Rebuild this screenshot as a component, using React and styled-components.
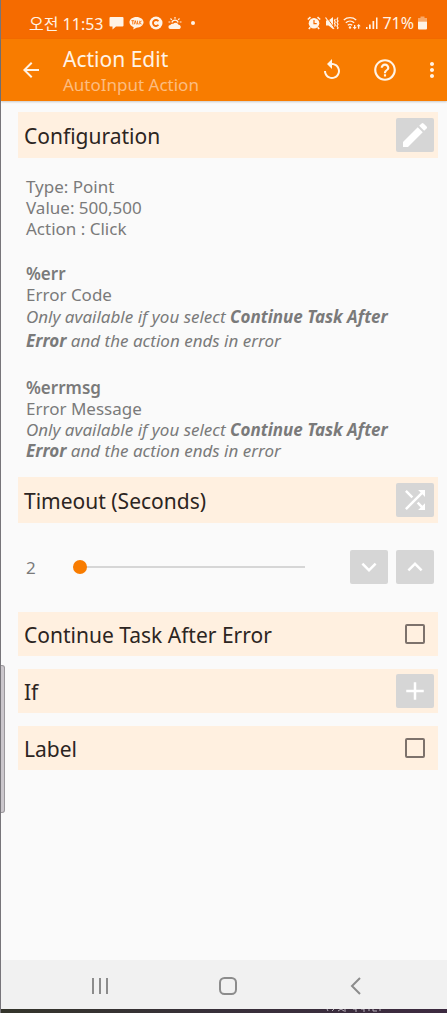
import React, { useState } from 'react';
import styled, { createGlobalStyle } from 'styled-components';
import {
  MdAdd,
  MdArrowBack,
  MdEdit,
  MdExpandLess,
  MdExpandMore,
  MdHelpOutline,
  MdMoreVert,
  MdReplay,
  MdShuffle,
} from 'react-icons/md';

const GlobalStyle = createGlobalStyle`
  * {
    box-sizing: border-box;
  }

  body {
    margin: 0;
    background-color: #fafafa;
    font-family: 'Noto Sans', 'Noto Sans CJK KR', sans-serif;
  }
`;

const Screen = styled.div`
  position: relative;
  display: flex;
  flex-direction: column;
  min-height: 100vh;
  border-left: 1px solid #77757a;
`;

const StatusBar = styled.div`
  display: flex;
  align-items: center;
  justify-content: space-between;
  height: 39px;
  padding: 7px 20px 0 28px;
  background-color: #f56b00;
  color: #fff3e6;
  font-size: 16px;
`;

const StatusGroup = styled.div`
  display: flex;
  align-items: center;
  gap: ${(props) => props.$gap};

  svg {
    display: block;
  }
`;

const Dot = styled.span`
  width: 4px;
  height: 4px;
  margin-left: 4px;
  border-radius: 50%;
  background-color: #fff3e6;
`;

const AppBar = styled.header`
  display: flex;
  align-items: center;
  height: 62px;
  padding-left: 18px;
  background-color: #f87c00;
  box-shadow: 0 1px 2px rgba(0, 0, 0, 0.2);
  color: #fff3e6;
`;

const BarButton = styled.button`
  display: flex;
  justify-content: center;
  width: ${(props) => props.$width || 'auto'};
  padding: 0;
  border: none;
  background: none;
  color: inherit;
  font-size: ${(props) => props.$size || '24px'};
  cursor: pointer;

  svg {
    flex-shrink: 0;
  }
`;

const BarTitles = styled.div`
  flex: 1;
  padding: 2px 0 0 20px;
`;

const BarTitle = styled.h1`
  margin: 0;
  font-size: 21px;
  font-weight: 400;
  line-height: 28px;
`;

const BarSubtitle = styled.div`
  color: #fcbd80;
  font-size: 17px;
  line-height: 24px;
`;

const BarActions = styled.div`
  display: flex;
  align-items: center;
  gap: 28px;
  padding-right: 9px;
`;

const Content = styled.main`
  flex: 1;
  padding: 11px 9px 24px 17px;
`;

const Section = styled.div`
  display: flex;
  align-items: center;
  justify-content: space-between;
  height: ${(props) => (props.$compact ? '44px' : '46px')};
  margin-bottom: ${(props) => (props.$compact ? '13px' : '0')};
  padding: 0 4px 0 6px;
  background-color: #fff0e0;
`;

const SectionTitle = styled.h2`
  margin: 0;
  padding-top: 2px;
  color: #2c2522;
  font-size: 21px;
  font-weight: 400;
`;

const SectionLabel = styled(SectionTitle).attrs({ as: 'label' })`
  flex: 1;
`;

const IconButton = styled.button`
  display: flex;
  align-items: center;
  justify-content: center;
  width: 38px;
  height: 34px;
  padding: 0;
  border: none;
  border-radius: 2px;
  background-color: #d6d6d6;
  color: #ffffff;
  font-size: ${(props) => props.$size || '30px'};
  cursor: pointer;
`;

const Details = styled.div`
  padding: 18px 8px 16px;
  color: #7a7a7a;
  font-size: 17px;
  line-height: 21px;
`;

const Paragraph = styled.p`
  margin: 0 0 24px;

  &:last-child {
    margin-bottom: 0;
  }
`;

const Variable = styled.strong`
  font-weight: 600;
`;

const Note = styled.em`
  display: block;
  line-height: ${(props) => (props.$loose ? '24px' : '21px')};
`;

const SliderRow = styled.div`
  display: flex;
  align-items: center;
  gap: 8px;
  padding: 27px 4px 28px 8px;
  color: #7a7a7a;
  font-size: 17px;
`;

const SliderValue = styled.output`
  width: 39px;
`;

const Slider = styled.input`
  flex: 1;
  min-width: 0;
  height: 14px;
  margin: 0 37px 0 0;
  appearance: none;
  background: linear-gradient(#d6d6d6, #d6d6d6) center / 100% 2px no-repeat;

  &::-webkit-slider-thumb {
    appearance: none;
    width: 14px;
    height: 14px;
    border-radius: 50%;
    background-color: #f87c00;
  }
`;

const CheckBox = styled.input`
  appearance: none;
  width: 20px;
  height: 20px;
  margin: 0 9px;
  border: 2px solid #7d726c;
  border-radius: 2px;

  &:checked {
    background-color: #f87c00;
  }
`;

const NavBar = styled.nav`
  display: flex;
  align-items: center;
  justify-content: space-between;
  height: 49px;
  padding: 2px 82px 0 90px;
  background-color: #f1f1f1;
  color: #8c8c8c;
`;

const Taskbar = styled.div`
  display: flex;
  justify-content: flex-end;
  height: 4px;
  padding-right: 64px;
  background: linear-gradient(90deg, #34352b 0%, #38303a 50%, #3d2a40 100%);
`;

const EdgeHandle = styled.div`
  position: absolute;
  top: 665px;
  left: 0;
  width: 4px;
  height: 148px;
  border: 1px solid #9b989c;
  border-left: none;
  border-radius: 0 3px 3px 0;
  background-color: #cbc7cc;
`;

const ChatIcon = () => (
  <svg width="15" height="14" viewBox="0 0 15 14" fill="currentColor">
    <path d="M1.500 1h12q1 0 1 1v7.500q0 1-1 1H7L3.500 13.500v-3h-2q-1 0-1-1V2q0-1 1-1z" />
  </svg>
);

const TalkIcon = () => (
  <svg width="15" height="14" viewBox="0 0 16 14">
    <path
      fill="currentColor"
      d="M8 .5c4.200 0 7.500 2.500 7.500 5.700S12.200 12 8 12l-3.500 2 .5-2.600C2.300 10.500.5 8.600.5 6.200.5 3 3.800.5 8 .5z"
    />
    <path
      fill="none"
      stroke="#f56b00"
      strokeWidth="0.9"
      d="M2.500 4.500h3M4 4.500v4M5.500 8.500l1.200-4 1.200 4M9 4.500v3.500h1.500M11.500 4.500v4M13.500 4.500l-2 2 2 2"
    />
  </svg>
);

const CoinIcon = () => (
  <svg width="14" height="14" viewBox="0 0 14 14">
    <circle cx="7" cy="7" r="6.500" fill="currentColor" />
    <path
      fill="none"
      stroke="#f56b00"
      strokeWidth="1.800"
      d="M9.400 5.200A3 3 0 1 0 9.400 8.800"
    />
  </svg>
);

const WeatherIcon = () => (
  <svg width="14" height="14" viewBox="0 0 14 14">
    <path
      fill="none"
      stroke="currentColor"
      strokeWidth="1.200"
      d="M7 1v1.800M2.500 2.500l1.300 1.300M11.500 2.500l-1.300 1.300M.5 6h1.800M11.700 6h1.800M3.900 6.500a3.200 3.200 0 0 1 6.200 0"
    />
    <path
      fill="currentColor"
      d="M2.500 13a2 2 0 0 1-.2-4 2.800 2.800 0 0 1 3-1.200 3 3 0 0 1 5.200 1 2.200 2.200 0 0 1 1 4.200z"
    />
  </svg>
);

const AlarmIcon = () => (
  <svg width="14" height="14" viewBox="0 0 14 14">
    <circle cx="7" cy="7.300" r="5.300" fill="currentColor" />
    <path
      fill="none"
      stroke="currentColor"
      strokeWidth="1.600"
      d="M.8 3.500L3.500 1.200M13.200 3.500l-2.700-2.300M3.300 11.300l-1.500 1.700M10.700 11.300l1.500 1.700"
    />
    <path fill="none" stroke="#f56b00" strokeWidth="1.200" d="M7 4v3.700h2.700" />
  </svg>
);

const VibrateIcon = () => (
  <svg width="14" height="14" viewBox="0 0 14 14">
    <path fill="currentColor" d="M1 4.500h2.500L8 1v12L3.500 9.500H1z" />
    <path stroke="#f56b00" strokeWidth="1" d="M1.500 1l8 11" />
    <path stroke="currentColor" strokeWidth="1.200" d="M.5 1.500l8.500 11.500" />
    <path
      fill="none"
      stroke="currentColor"
      strokeWidth="1.200"
      d="M10.300 3l-.8 1.500 .8 1.500-.8 1.500.8 1.500-.8 1.500M13 1.500l-1 1.700 1 1.700-1 1.700 1 1.700-1 1.700 1 1.700-.6 1.300"
    />
  </svg>
);

const WifiIcon = () => (
  <svg width="18" height="14" viewBox="0 0 18 14">
    <path
      fill="none"
      stroke="currentColor"
      strokeWidth="1.300"
      d="M.8 4a9.500 9.500 0 0 1 12.400 0M2.800 6.700a6.500 6.500 0 0 1 8.400 0M4.800 9.200a3.600 3.600 0 0 1 4.400 0"
    />
    <circle cx="7" cy="11.500" r="1.200" fill="currentColor" />
    <path
      fill="currentColor"
      d="M11 9h1.300v2h1.400l-2 2.400-2-2.400H11zM15 12.800h1.300V10.300h1.400l-2-2.300-2 2.300H15z"
    />
  </svg>
);

const SignalIcon = () => (
  <svg width="13" height="14" viewBox="0 0 13 14" fill="currentColor">
    <path d="M1 11h1.500v2H1zM4 8.500h1.700V13H4zM7.500 5h1.700v8H7.500zM11 1.500h1.500V13H11z" />
  </svg>
);

const BatteryIcon = () => (
  <svg width="9" height="14" viewBox="0 0 9 14" fill="currentColor">
    <path opacity="0.45" d="M2.500.5h4V2H9v3.500H0V2h2.500z" />
    <path d="M0 5.500h9v7q0 1-1 1H1q-1 0-1-1z" />
  </svg>
);

const RecentsIcon = () => (
  <svg width="18" height="18" viewBox="0 0 18 18" stroke="currentColor" strokeWidth="2">
    <path d="M2 1v16M9 1v16M16 1v16" />
  </svg>
);

const HomeIcon = () => (
  <svg width="20" height="20" viewBox="0 0 20 20" fill="none" stroke="currentColor" strokeWidth="2">
    <rect x="2" y="2" width="16" height="16" rx="4.500" />
  </svg>
);

const BackIcon = () => (
  <svg width="18" height="18" viewBox="0 0 18 18" fill="none" stroke="currentColor" strokeWidth="2">
    <path d="M13 1L5 9l8 8" />
  </svg>
);

// the slivers of light that peek over the taskbar's top edge
const TaskbarMarks = () => (
  <svg width="58" height="4" viewBox="0 0 58 4" fill="none" stroke="#b5adb8">
    <path d="M2 0l1 2M9 0L7 2M13 2l3-2M16 0l3 2M20 0v3M28 0h3v3M36 0h3v3M43 1h2M48 0v2h4M55 0v2" />
  </svg>
);

const App = () => {
  const [timeout, setTimeoutValue] = useState(2);
  const [continueAfterError, setContinueAfterError] = useState(false);
  const [hasLabel, setHasLabel] = useState(false);

  return (
    <Screen>
      <GlobalStyle />
      <StatusBar>
        <StatusGroup $gap="5px">
          <span>오전 11:53</span>
          <ChatIcon />
          <TalkIcon />
          <CoinIcon />
          <WeatherIcon />
          <Dot />
        </StatusGroup>
        <StatusGroup $gap="4px">
          <AlarmIcon />
          <VibrateIcon />
          <WifiIcon />
          <SignalIcon />
          <span>71%</span>
          <BatteryIcon />
        </StatusGroup>
      </StatusBar>

      <AppBar>
        <BarButton aria-label="Back">
          <MdArrowBack />
        </BarButton>
        <BarTitles>
          <BarTitle>Action Edit</BarTitle>
          <BarSubtitle>AutoInput Action</BarSubtitle>
        </BarTitles>
        <BarActions>
          <BarButton aria-label="Reset">
            <MdReplay />
          </BarButton>
          <BarButton aria-label="Help" $size="26px">
            <MdHelpOutline />
          </BarButton>
          <BarButton aria-label="More options" $width="12px">
            <MdMoreVert />
          </BarButton>
        </BarActions>
      </AppBar>

      <Content>
        <Section>
          <SectionTitle>Configuration</SectionTitle>
          <IconButton aria-label="Edit configuration" $size="32px">
            <MdEdit />
          </IconButton>
        </Section>
        <Details>
          <Paragraph>
            Type: Point
            <br />
            Value: 500,500
            <br />
            Action : Click
          </Paragraph>
          <Paragraph>
            <Variable>%err</Variable>
            <br />
            Error Code
            <Note $loose>
              Only available if you select <strong>Continue Task After Error</strong> and the action ends in error
            </Note>
          </Paragraph>
          <Paragraph>
            <Variable>%errmsg</Variable>
            <br />
            Error Message
            <Note>
              Only available if you select <strong>Continue Task After Error</strong> and the action ends in error
            </Note>
          </Paragraph>
        </Details>

        <Section>
          <SectionTitle>Timeout (Seconds)</SectionTitle>
          <IconButton aria-label="Use variable">
            <MdShuffle />
          </IconButton>
        </Section>
        <SliderRow>
          <SliderValue htmlFor="timeout">{timeout}</SliderValue>
          <Slider
            id="timeout"
            type="range"
            aria-label="Timeout in seconds"
            min="2"
            max="60"
            value={timeout}
            onChange={(e) => setTimeoutValue(Number(e.target.value))}
          />
          <IconButton aria-label="Decrease" onClick={() => setTimeoutValue(Math.max(2, timeout - 1))}>
            <MdExpandMore />
          </IconButton>
          <IconButton aria-label="Increase" onClick={() => setTimeoutValue(Math.min(60, timeout + 1))}>
            <MdExpandLess />
          </IconButton>
        </SliderRow>

        <Section $compact>
          <SectionLabel htmlFor="continue">Continue Task After Error</SectionLabel>
          <CheckBox
            id="continue"
            type="checkbox"
            checked={continueAfterError}
            onChange={(e) => setContinueAfterError(e.target.checked)}
          />
        </Section>
        <Section $compact>
          <SectionTitle>If</SectionTitle>
          <IconButton aria-label="Add condition">
            <MdAdd />
          </IconButton>
        </Section>
        <Section $compact>
          <SectionLabel htmlFor="label">Label</SectionLabel>
          <CheckBox
            id="label"
            type="checkbox"
            checked={hasLabel}
            onChange={(e) => setHasLabel(e.target.checked)}
          />
        </Section>
      </Content>

      <NavBar>
        <BarButton aria-label="Recent apps">
          <RecentsIcon />
        </BarButton>
        <BarButton aria-label="Home">
          <HomeIcon />
        </BarButton>
        <BarButton aria-label="Go back">
          <BackIcon />
        </BarButton>
      </NavBar>
      <Taskbar>
        <TaskbarMarks />
      </Taskbar>
      <EdgeHandle />
    </Screen>
  );
};

export default App;
